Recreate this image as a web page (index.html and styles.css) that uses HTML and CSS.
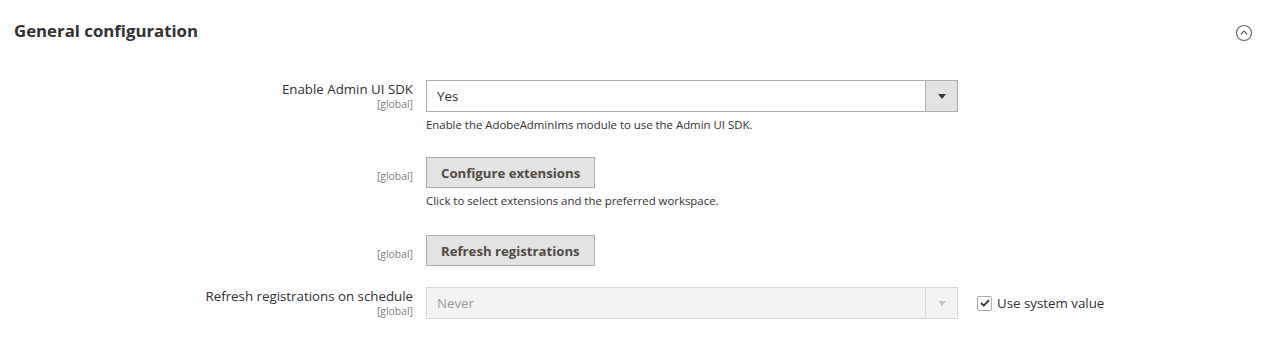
FILE: index.html
```html
<!DOCTYPE html>
<html lang="en">
<head>
    <meta charset="UTF-8">
    <title>General configuration</title>
    <link rel="stylesheet" href="styles.css">
</head>
<body>
<div class="section">
    <div class="section-head">
        <h2>General configuration</h2>
        <span class="collapse-icon">
            <svg width="18" height="18" viewBox="0 0 18 18">
                <circle cx="9" cy="9" r="7.5" fill="none" stroke="#666" stroke-width="1.2"/>
                <path d="M5.8 10.4 L9 7.2 L12.2 10.4" fill="none" stroke="#555" stroke-width="1.2"/>
            </svg>
        </span>
    </div>

    <div class="config-row row-first">
        <div class="label-col">
            <span class="label">Enable Admin UI SDK</span>
            <span class="scope">[global]</span>
        </div>
        <div class="field-col">
            <div class="select">
                <span class="select-value">Yes</span>
                <span class="select-arrow"></span>
            </div>
            <p class="note">Enable the AdobeAdminIms module to use the Admin UI SDK.</p>
        </div>
    </div>

    <div class="config-row row-second">
        <div class="label-col label-button">
            <span class="scope">[global]</span>
        </div>
        <div class="field-col">
            <button type="button" class="btn">Configure extensions</button>
            <p class="note">Click to select extensions and the preferred workspace.</p>
        </div>
    </div>

    <div class="config-row row-third">
        <div class="label-col label-button">
            <span class="scope">[global]</span>
        </div>
        <div class="field-col">
            <button type="button" class="btn">Refresh registrations</button>
        </div>
    </div>

    <div class="config-row row-fourth">
        <div class="label-col">
            <span class="label">Refresh registrations on schedule</span>
            <span class="scope">[global]</span>
        </div>
        <div class="field-col">
            <div class="select disabled">
                <span class="select-value">Never</span>
                <span class="select-arrow"></span>
            </div>
        </div>
        <label class="use-default">
            <span class="checkbox">
                <svg width="10" height="8" viewBox="0 0 10 8">
                    <path d="M1 4 L3.8 6.6 L9 1.2" fill="none" stroke="#303030" stroke-width="1.8"/>
                </svg>
            </span>
            Use system value
        </label>
    </div>
</div>
</body>
</html>
```

FILE: styles.css
```css
/* Global Styles */
* {
    margin: 0;
    padding: 0;
    box-sizing: border-box;
}

body {
    background-color: #fff;
    font-family: "Open Sans", "Liberation Sans", sans-serif;
    color: #303030;
    font-size: 13.3px;
}

.section {
    padding: 0 0 0 14px;
}

.section-head {
    display: flex;
    justify-content: space-between;
    align-items: center;
    height: 62px;
    padding-right: 27px;
}

.section-head h2 {
    font-size: 16.8px;
    font-weight: 700;
    color: #303030;
    margin-top: -1px;
}

.collapse-icon {
    display: flex;
    margin-top: 4px;
}

/* Rows */
.config-row {
    display: flex;
    align-items: flex-start;
}

.row-first {
    margin-top: 18px;
}

.row-second {
    margin-top: 23px;
}

.row-third {
    margin-top: 25px;
}

.row-fourth {
    margin-top: 21px;
}

.label-col {
    width: 399px;
    display: flex;
    flex-direction: column;
    align-items: flex-end;
    padding-top: 1px;
}

.label-button {
    padding-top: 13px;
}

.label {
    font-size: 13.3px;
    line-height: 17px;
    color: #303030;
}

.scope {
    font-size: 10.4px;
    line-height: 12px;
    color: #808080;
}

.field-col {
    margin-left: 13px;
    width: 532px;
}

/* Select */
.select {
    display: flex;
    height: 32px;
    border: 1px solid #adadad;
    background-color: #fff;
}

.select-value {
    flex: 1;
    padding-left: 10px;
    line-height: 30px;
    font-size: 13.3px;
}

.select-arrow {
    width: 32px;
    background-color: #e3e3e3;
    border-left: 1px solid #adadad;
    display: flex;
    align-items: center;
    justify-content: center;
}

.select-arrow::after {
    content: "";
    border-left: 4px solid transparent;
    border-right: 4px solid transparent;
    border-top: 5px solid #41362f;
    margin-top: 1px;
}

.select.disabled {
    background-color: #f3f3f3;
    border-color: #d6d6d6;
}

.select.disabled .select-value {
    color: #999;
}

.select.disabled .select-arrow {
    background-color: #f3f3f3;
    border-left-color: #d6d6d6;
}

.select.disabled .select-arrow::after {
    border-top-color: #c4c4c4;
}

.note {
    font-size: 11.4px;
    line-height: 18px;
    margin-top: 4px;
    color: #303030;
}

/* Buttons */
.btn {
    height: 31px;
    padding: 0 14px;
    background-color: #e3e3e3;
    border: 1px solid #adadad;
    color: #514943;
    font-family: "Open Sans", "Liberation Sans", sans-serif;
    font-size: 13.2px;
    font-weight: 700;
    cursor: pointer;
}

/* Use system value */
.use-default {
    display: flex;
    align-items: center;
    margin-left: 19px;
    margin-top: 7px;
    font-size: 13.3px;
    color: #303030;
}

.checkbox {
    width: 15px;
    height: 15px;
    border: 1px solid #adadad;
    border-radius: 2px;
    display: flex;
    align-items: center;
    justify-content: center;
    margin-right: 5px;
}
```
